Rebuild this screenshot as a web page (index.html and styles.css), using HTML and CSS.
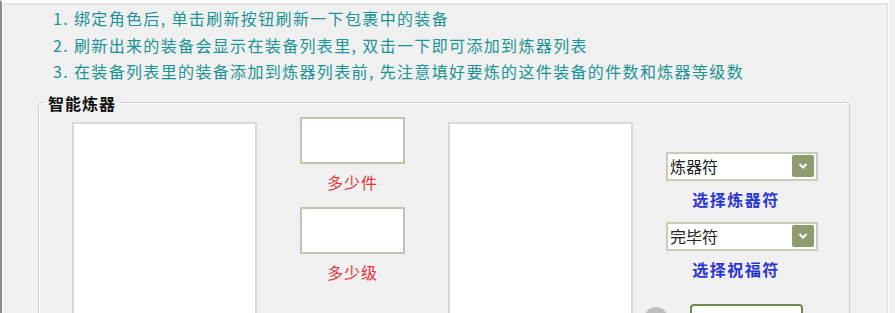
FILE: index.html
```html
<!DOCTYPE html>
<html lang="zh-CN">
<head>
    <meta charset="UTF-8">
    <title>智能炼器</title>
    <link rel="stylesheet" href="styles.css">
</head>
<body>
    <div class="frame">
        <div class="tips">
            <p>1. 绑定角色后, 单击刷新按钮刷新一下包裹中的装备</p>
            <p>2. 刷新出来的装备会显示在装备列表里, 双击一下即可添加到炼器列表</p>
            <p>3. 在装备列表里的装备添加到炼器列表前, 先注意填好要炼的这件装备的件数和炼器等级数</p>
        </div>
        <fieldset class="group">
            <legend>智能炼器</legend>
            <div class="row">
                <div class="listbox"></div>
                <div class="counts">
                    <input class="field" type="text">
                    <div class="red-label">多少件</div>
                    <input class="field second" type="text">
                    <div class="red-label">多少级</div>
                </div>
                <div class="listbox"></div>
                <div class="pickers">
                    <div class="combo">
                        <span>炼器符</span>
                        <span class="drop"><svg width="12" height="12" viewBox="0 0 12 12"><path d="M2.5 4 L6 7.5 L9.5 4" fill="none" stroke="#fff" stroke-width="2"/></svg></span>
                    </div>
                    <div class="blue-label">选择炼器符</div>
                    <div class="combo second">
                        <span>完毕符</span>
                        <span class="drop"><svg width="12" height="12" viewBox="0 0 12 12"><path d="M2.5 4 L6 7.5 L9.5 4" fill="none" stroke="#fff" stroke-width="2"/></svg></span>
                    </div>
                    <div class="blue-label">选择祝福符</div>
                    <div class="actions">
                        <span class="dot"></span>
                        <button class="go"></button>
                    </div>
                </div>
            </div>
        </fieldset>
    </div>
</body>
</html>
```

FILE: styles.css
```css
body {
    margin: 0;
    height: 313px;
    overflow: hidden;
    background-color: #f0f0f0;
    font-family: "Noto Sans CJK SC", "Noto Sans", sans-serif;
}

.frame {
    width: 886px;
    height: 340px;
    border-left: 2px solid #8c8c8c;
    border-top: 2px solid #fff;
    border-right: 1px solid #fff;
    box-shadow: inset 1px 1px 0 #fff, inset 0 3px 0 #e2e2e2, inset -1px 0 0 #dcdcdc;
}

.tips {
    padding: 3px 0 0 51px;
}

.tips p {
    margin: 0;
    height: 26.5px;
    line-height: 26.5px;
    font-size: 16px;
    letter-spacing: 1.35px;
    color: #1c9494;
}

.group {
    margin: 8px 0 0 36px;
    padding: 0 0 0 33px;
    width: 812px;
    box-sizing: border-box;
    height: 260px;
    border: 1px solid #cfcfcf;
    border-radius: 4px;
    box-shadow: inset 1px 1px 0 #fff;
}

.group legend {
    margin-left: -27px;
    padding: 0 3px;
    height: 20px;
    line-height: 20px;
    font-size: 16px;
    font-weight: bold;
    letter-spacing: 1px;
    color: #111;
}

.row {
    display: flex;
    align-items: flex-start;
}

.listbox {
    margin-top: 9px;
    width: 185px;
    height: 220px;
    box-sizing: border-box;
    background: #fff;
    border: 2px solid #d8d8d8;
}

.counts {
    margin: 4px 43px 0 43px;
    width: 105px;
    display: flex;
    flex-direction: column;
    align-items: center;
}

.field {
    width: 105px;
    height: 47px;
    box-sizing: border-box;
    margin: 0;
    border: 2px solid #bcc6ac;
    background: #fff;
}

.field.second {
    margin-top: 15px;
}

.red-label {
    margin-top: 8px;
    height: 20px;
    line-height: 20px;
    font-size: 16px;
    letter-spacing: 1px;
    color: #e2363a;
}

.pickers {
    margin: 39px 0 0 33px;
    width: 152px;
    display: flex;
    flex-direction: column;
    align-items: center;
}

.combo {
    width: 152px;
    height: 29px;
    box-sizing: border-box;
    border: 2px solid #c6ceb8;
    background: #fff;
    display: flex;
    align-items: center;
    justify-content: space-between;
    padding: 0 2px 0 2px;
    font-size: 16px;
    color: #222;
}

.combo.second {
    margin-top: 13px;
}

.drop {
    width: 22px;
    height: 22px;
    background: #8e9c70;
    border-radius: 2px;
    display: flex;
    align-items: center;
    justify-content: center;
}

.blue-label {
    margin-top: 8px;
    height: 20px;
    line-height: 20px;
    font-size: 16px;
    font-weight: bold;
    letter-spacing: 1.5px;
    color: #2a35d6;
    padding-right: 12px;
}

.actions {
    margin-top: 25px;
    margin-left: -38px;
    display: flex;
    align-items: flex-start;
    gap: 22px;
}

.dot {
    margin-top: 3px;
    width: 24px;
    height: 24px;
    border-radius: 50%;
    background: #bdbdbd;
}

.go {
    width: 113px;
    height: 30px;
    background: #fff;
    border: 2px solid #6e8a4c;
    border-radius: 4px;
}
```
